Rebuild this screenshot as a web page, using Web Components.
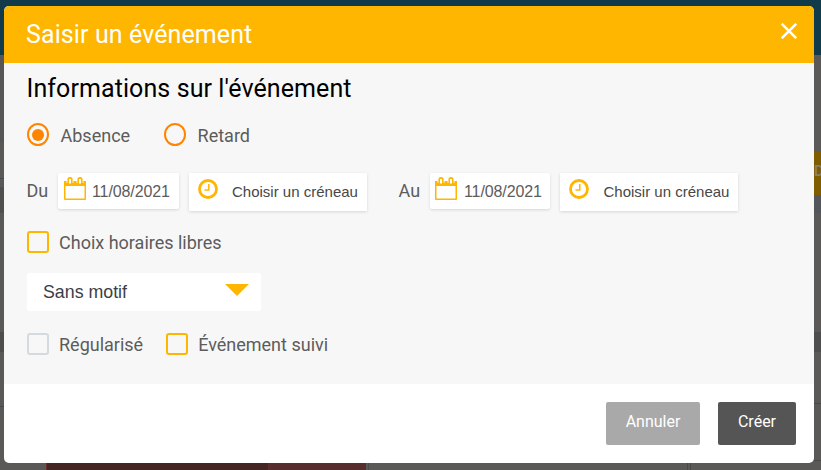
<!DOCTYPE html>
<html lang="fr"><head><meta charset="utf-8"><title>Saisir un événement</title>
<style>
html,body{margin:0;height:100%;overflow:hidden}
body{font-family:Roboto,sans-serif;color:#5c5c5c}
</style></head><body>
<app-backdrop><event-dialog></event-dialog></app-backdrop>
<script>
const define=(name,html)=>customElements.define(name,class extends HTMLElement{
  connectedCallback(){
    if(this.shadowRoot)return;
    const t=document.createElement('template');t.innerHTML=html;
    this.attachShadow({mode:'open'}).append(t.content.cloneNode(true));
  }
});
define('app-backdrop',`<style>
:host{display:block;position:relative;width:821px;height:470px;box-sizing:border-box;padding:6px 7px 7px 4px;overflow:hidden;background:#5a5958}
i{position:absolute;display:block}
.top{inset:0 0 auto;height:55px;background:#113a4a}
.edge{left:0;width:4px}
.right{left:814px;width:7px}
.clip{overflow:hidden;font:500 15px/18px Roboto}
slot{position:relative;z-index:1;display:block}
</style>
<i class="top"></i>
<i class="edge" style="top:55px;height:88px;background:#575656"></i>
<i class="edge" style="top:178px;height:1px;background:#484848"></i>
<i class="edge" style="top:187px;height:26px;background:#50504e"></i>
<i class="edge" style="top:332px;height:20px;background:#4e4d4c"></i>
<i class="edge" style="top:406px;height:1px;background:#4a4a4a"></i>
<i class="right" style="top:152px;height:43px;background:#805c00"></i>
<i class="right clip" style="top:162px;height:18px;color:#8d8166">D</i>
<i class="right" style="top:195px;height:18px;background:#53565a"></i>
<i class="right" style="top:332px;height:20px;background:#4e4e4e"></i>
<i class="right" style="top:403px;height:1px;background:#484848"></i>
<i class="right" style="top:460px;height:1px;background:#484848"></i>
<i style="left:46px;top:463px;width:320px;height:7px;background:#582d2d"></i>
<i style="left:46px;top:463px;width:222px;height:7px;background:#452424"></i>
<i style="left:46px;top:463px;width:1px;height:7px;background:#682e2e"></i>
<i style="left:368px;top:463px;width:1px;height:7px;background:#4b4b4b"></i>
<i style="left:687px;top:463px;width:1px;height:7px;background:#494949"></i>
<i style="left:690px;top:463px;width:1px;height:7px;background:#494949"></i>
<slot></slot>`);
define('close-icon',`<style>:host{display:block;width:16px;height:16px}svg{display:block}</style>
<svg width="16" height="16" viewBox="0 0 16 16"><path d="M.8.8 15.2 15.2M15.2.8.8 15.2" stroke="#fff" stroke-width="2.5" fill="none"/></svg>`);
define('calendar-icon',`<style>:host{display:block;width:22px;height:23px}svg{display:block}</style>
<svg width="22" height="23" viewBox="0 0 22 23"><path d="M0 4h22v18q0 1-1 1H1q-1 0-1-1Z" fill="#ffb600"/><path d="M1.5 9h19v12.5h-19Z" fill="#fff"/><path d="M3.4 7V2q0-2 2.6-2t2.6 2v5ZM13.4 7V2q0-2 2.6-2t2.6 2v5Z" fill="#ffb600"/><path d="M5 6.5V2h2v4.5ZM15 6.5V2h2v4.5ZM2.6 4h.8v2h-.8ZM8.6 4h.8v2h-.8ZM12.6 4h.8v2h-.8ZM18.6 4h.8v2h-.8Z" fill="#fff"/></svg>`);
define('clock-icon',`<style>:host{display:block;width:20px;height:20px}svg{display:block}</style>
<svg width="20" height="20" viewBox="0 0 20 20" fill="none" stroke="#ffb600"><circle cx="10" cy="10" r="8.5" stroke-width="2.8"/><path d="M10.8 5v6H6.5" stroke-width="1.5"/></svg>`);
define('option-mark',`<style>
:host{display:flex;align-items:center;gap:var(--gap,10px);font-size:18px;line-height:22px;color:#5c5c5c;white-space:nowrap}
b{box-sizing:border-box;flex:none;width:22px;height:22px;border:2px solid #ffb600;border-radius:3px;display:grid;place-items:center}
:host([muted]) b{border-color:#d5d9e0}
:host([radio]) b{border-color:#ff8500;border-radius:50%;height:23px}
:host([radio][on]) b::before{content:"";width:12px;height:12px;border-radius:50%;background:#ff8500}
span{position:relative;top:1px}
</style><b></b><span><slot></slot></span>`);
define('date-field',`<style>
:host{display:flex;box-sizing:border-box;width:var(--w,121px);height:36px;padding:4px 0 0 var(--pl,6px);gap:var(--gap,6px);background:#fff;border-radius:2px;box-shadow:0 1px 3px #0002;font:16px/29px "Liberation Sans",Arial,sans-serif;color:#5c5c5c}
span{letter-spacing:-.1px}
</style><calendar-icon></calendar-icon><span><slot></slot></span>`);
define('slot-field',`<style>
:host{display:flex;box-sizing:border-box;width:178px;height:38px;padding:6px 0 0 9px;gap:var(--gap,14px);background:#fff;box-shadow:0 1px 3px #0002;font:15px/26px "Liberation Sans",Arial,sans-serif;color:#474747;white-space:nowrap}
</style><clock-icon></clock-icon><span><slot></slot></span>`);
define('motif-select',`<style>
:host{display:flex;box-sizing:border-box;width:234px;height:38px;align-items:center;justify-content:space-between;padding:0 12px 0 16px;background:#fff;border-radius:2px;font:17.8px/38px "Liberation Sans",Arial,sans-serif;color:#3c3e48}
svg{display:block;margin-top:-4px}
</style><span><slot></slot></span><svg width="24" height="12"><path d="M0 0h24L12 12Z" fill="#ffb600"/></svg>`);
define('action-button',`<style>
:host{display:block;box-sizing:border-box;height:43px;width:94px;border-radius:2px;background:#a9a9a9;color:#fff;text-align:center;font-size:16px;line-height:39px}
:host([primary]){width:78px;background:#555}
</style><slot></slot>`);
define('event-dialog',`<style>
:host{display:grid;grid-template-rows:57px 321px 79px;width:810px;height:457px;border-radius:5px;overflow:hidden;background:#fff}
header{display:flex;justify-content:space-between;background:#ffb600;color:#fff;padding:0 17px 0 22px;font-size:25px;line-height:57px;letter-spacing:.1px}
close-icon{margin-top:17px}
main{background:#f7f7f7;padding:0 23px;display:grid;grid-template-rows:52px 40px 70px 36px 67px 1fr;align-items:start}
h2{margin:0 0 0 -.5px;color:#000;font-weight:400;font-size:25px;line-height:52px;letter-spacing:.09px}
.row{display:flex}
.when{font-size:18px;padding-top:18px}
.when>span{line-height:36px}
footer{display:flex;justify-content:flex-end;gap:18px;padding:18px 18px 0 0}
</style>
<header><span>Saisir un événement</span><close-icon></close-icon></header>
<main>
<h2>Informations sur l'événement</h2>
<div class="row" style="gap:34px;padding-top:8px"><option-mark radio on style="--gap:11.5px">Absence</option-mark><option-mark radio style="--gap:11.5px">Retard</option-mark></div>
<div class="row when"><span style="width:31.5px;margin-left:-.5px">Du</span><date-field>11/08/2021</date-field><slot-field style="margin-left:10px">Choisir un créneau</slot-field><span style="width:31.5px;margin-left:31.5px">Au</span><date-field style="--w:120px;--pl:5px;--gap:7px">11/08/2021</date-field><slot-field style="margin-left:10px;--gap:14.5px">Choisir un créneau</slot-field></div>
<option-mark style="padding-top:6px">Choix horaires libres</option-mark>
<motif-select style="margin-top:12px">Sans motif</motif-select>
<div class="row" style="gap:23px;padding-top:5px"><option-mark muted>Régularisé</option-mark><option-mark>Événement suivi</option-mark></div>
</main>
<footer><action-button>Annuler</action-button><action-button primary>Créer</action-button></footer>`);
</script></body></html>
